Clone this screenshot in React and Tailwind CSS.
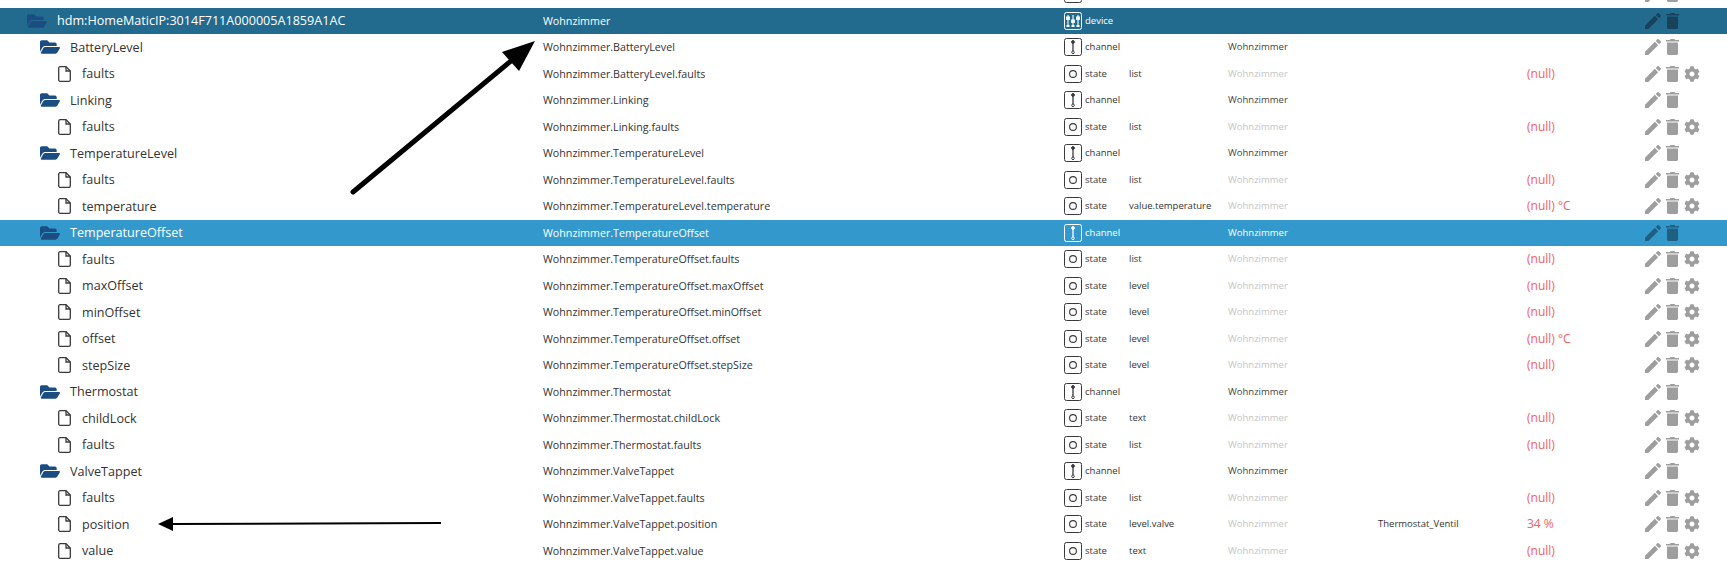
import React from 'react';
import { FaFolderOpen, FaCog } from 'react-icons/fa';

const ROOM = 'Wohnzimmer';

const rows = [
  { kind: 'device', name: 'hdm:HomeMaticIP:3014F711A000005A1859A1AC', id: ROOM },
  { kind: 'channel', name: 'BatteryLevel', id: 'Wohnzimmer.BatteryLevel' },
  { kind: 'state', name: 'faults', id: 'Wohnzimmer.BatteryLevel.faults', role: 'list', value: '(null)' },
  { kind: 'channel', name: 'Linking', id: 'Wohnzimmer.Linking' },
  { kind: 'state', name: 'faults', id: 'Wohnzimmer.Linking.faults', role: 'list', value: '(null)' },
  { kind: 'channel', name: 'TemperatureLevel', id: 'Wohnzimmer.TemperatureLevel' },
  { kind: 'state', name: 'faults', id: 'Wohnzimmer.TemperatureLevel.faults', role: 'list', value: '(null)' },
  { kind: 'state', name: 'temperature', id: 'Wohnzimmer.TemperatureLevel.temperature', role: 'value.temperature', value: '(null) °C' },
  { kind: 'channel', name: 'TemperatureOffset', id: 'Wohnzimmer.TemperatureOffset', selected: true },
  { kind: 'state', name: 'faults', id: 'Wohnzimmer.TemperatureOffset.faults', role: 'list', value: '(null)' },
  { kind: 'state', name: 'maxOffset', id: 'Wohnzimmer.TemperatureOffset.maxOffset', role: 'level', value: '(null)' },
  { kind: 'state', name: 'minOffset', id: 'Wohnzimmer.TemperatureOffset.minOffset', role: 'level', value: '(null)' },
  { kind: 'state', name: 'offset', id: 'Wohnzimmer.TemperatureOffset.offset', role: 'level', value: '(null) °C' },
  { kind: 'state', name: 'stepSize', id: 'Wohnzimmer.TemperatureOffset.stepSize', role: 'level', value: '(null)' },
  { kind: 'channel', name: 'Thermostat', id: 'Wohnzimmer.Thermostat' },
  { kind: 'state', name: 'childLock', id: 'Wohnzimmer.Thermostat.childLock', role: 'text', value: '(null)' },
  { kind: 'state', name: 'faults', id: 'Wohnzimmer.Thermostat.faults', role: 'list', value: '(null)' },
  { kind: 'channel', name: 'ValveTappet', id: 'Wohnzimmer.ValveTappet' },
  { kind: 'state', name: 'faults', id: 'Wohnzimmer.ValveTappet.faults', role: 'list', value: '(null)' },
  { kind: 'state', name: 'position', id: 'Wohnzimmer.ValveTappet.position', role: 'level.valve', func: 'Thermostat_Ventil', value: '34 %' },
  { kind: 'state', name: 'value', id: 'Wohnzimmer.ValveTappet.value', role: 'text', value: '(null)' },
];

const FileIcon = () => (
  <svg viewBox="0 0 13 16" className="w-[13px] h-4 shrink-0" fill="none" stroke="#3a3a3a" strokeWidth="1.3">
    <path d="M2 .7h6l4.3 4.3v9c0 .7-.6 1.3-1.3 1.3H2c-.7 0-1.3-.6-1.3-1.3V2C.7 1.3 1.3.7 2 .7z" />
    <path d="M8 .7V5h4.3" />
  </svg>
);

const TypeIcon = ({ kind, light }) => {
  const c = light ? '#ffffff' : '#3a3a3a';
  return (
    <svg viewBox="0 0 18 18" className="w-[18px] h-[18px] shrink-0" fill="none" stroke={c} strokeWidth="1">
      <rect x="0.5" y="0.5" width="17" height="17" rx="2" />
      {kind === 'state' && <circle cx="9" cy="9" r="3.4" strokeWidth="1.1" />}
      {kind === 'channel' && (
        <g>
          <path d="M9 4v9" strokeWidth="1.3" />
          <circle cx="9" cy="4" r="1.4" fill={c} />
          <circle cx="9" cy="14.3" r="1.3" />
        </g>
      )}
      {kind === 'device' && (
        <g strokeWidth="1.1">
          <path d="M4 3v12M9 3v12M14 3v12" />
          <rect x="2.7" y="5" width="2.6" height="2.4" fill={c} />
          <rect x="7.7" y="8" width="2.6" height="2.4" fill={c} />
          <rect x="12.7" y="5" width="2.6" height="2.4" fill={c} />
          <path d="M2.5 14h3M7.5 14h3M12.5 14h3" strokeWidth="2" />
        </g>
      )}
    </svg>
  );
};

const Pencil = ({ color }) => (
  <svg viewBox="3 3 18 18" className="w-4 h-4 shrink-0" fill={color}>
    <path d="M3 17.25V21h3.75L17.81 9.94l-3.75-3.75L3 17.25zM20.71 7.04c.39-.39.39-1.02 0-1.41l-2.34-2.34c-.39-.39-1.02-.39-1.41 0l-1.83 1.83 3.75 3.75 1.83-1.83z" />
  </svg>
);

const Trash = ({ color }) => (
  <svg viewBox="0 0 13 16" className="w-[13px] h-4 shrink-0" fill={color}>
    <path d="M4.5 0h4l.6 1H13v1.4H0V1h3.9zM1 3.4h11V14.6c0 .8-.6 1.4-1.4 1.4H2.4c-.8 0-1.4-.6-1.4-1.4z" />
  </svg>
);

const Row = ({ row }) => {
  const isDevice = row.kind === 'device';
  const isChannel = row.kind === 'channel';
  const isState = row.kind === 'state';
  const dark = isDevice || row.selected;
  const bg = isDevice ? 'bg-[#236b8e]' : row.selected ? 'bg-[#3399cc]' : 'bg-white';
  const textCol = dark ? 'text-white' : 'text-[#333333]';
  const btn = isDevice ? '#17425a' : row.selected ? '#1f5f80' : '#9e9e9e';
  const roomCol = isChannel ? (dark ? 'text-white' : 'text-[#444444]') : 'text-[#c4c4c4]';
  const indent = isDevice ? 'pl-[27px] gap-[10px]' : isChannel ? 'pl-[40px] gap-[10px]' : 'pl-[58px] gap-[11px]';

  return (
    <div className={`flex items-center h-[26.5px] ${bg} ${textCol}`}>
      <div className={`w-[543px] shrink-0 flex items-center text-[12.6px] ${indent}`}>
        {isState ? <FileIcon /> : <FaFolderOpen className="w-5 h-[18px] shrink-0 text-[#1b4d83]" />}
        <span className="mt-[2px]">{row.name}</span>
      </div>
      <div className="w-[521px] shrink-0 text-[10.7px]">{row.id}</div>
      <div className="w-[65px] shrink-0 flex items-center gap-[3px] text-[9.5px]">
        <TypeIcon kind={row.kind} light={dark} />
        <span>{row.kind}</span>
      </div>
      <div className="w-[99px] shrink-0 text-[9.5px]">{row.role}</div>
      <div className={`w-[150px] shrink-0 text-[9.5px] ${roomCol}`}>{isDevice ? '' : ROOM}</div>
      <div className="w-[149px] shrink-0 text-[9.5px]">{row.func}</div>
      <div className="w-[118px] shrink-0 text-[12px] text-[#f46060]">{row.value}</div>
      <div className="flex items-center gap-[5px]">
        <Pencil color={btn} />
        <Trash color={btn} />
        {isState && <FaCog className="w-4 h-4 shrink-0 text-[#9e9e9e]" />}
      </div>
    </div>
  );
};

export default function App() {
  return (
    <div className="relative w-[1727px] h-[568px] overflow-hidden bg-white font-['Open_Sans','Noto_Sans',sans-serif]">
      {/* row cut off by the top edge, only the icon bottoms show */}
      <div className="h-[7.5px] overflow-hidden relative">
        <div className="flex items-end h-[7px]">
          <div className="pl-[27px] w-[1064px] shrink-0 h-[7px] overflow-hidden flex items-end">
            <FaFolderOpen className="w-5 h-[18px] shrink-0 text-[#1b4d83] -translate-y-[5px]" />
          </div>
          <div className="w-[581px] shrink-0 h-[7px] overflow-hidden">
            <div className="-translate-y-[15px]"><TypeIcon kind="device" /></div>
          </div>
          <div className="flex gap-[5px] h-[7px] overflow-hidden">
            <div className="-translate-y-[14px]"><Pencil color="#9e9e9e" /></div>
            <div className="-translate-y-[14px]"><Trash color="#9e9e9e" /></div>
          </div>
        </div>
      </div>

      {rows.map((row, i) => (
        <Row key={i} row={row} />
      ))}

      {/* annotation arrows drawn on top of the screenshot */}
      <svg className="absolute inset-0 pointer-events-none" width="1727" height="568">
        <line x1="353" y1="192" x2="512" y2="60" stroke="#000" strokeWidth="5" strokeLinecap="round" />
        <polygon points="535,41 502,52 519,71" fill="#000" />
        <line x1="441" y1="523" x2="170" y2="524" stroke="#000" strokeWidth="2" />
        <polygon points="158,524 173,517 173,531" fill="#000" />
      </svg>
    </div>
  );
}
